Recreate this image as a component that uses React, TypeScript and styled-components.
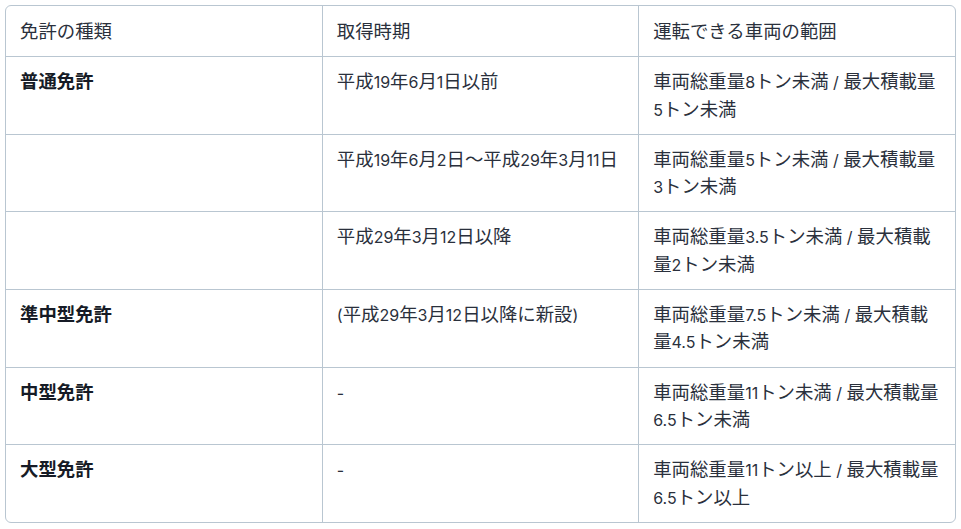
import React from "react";
import styled, { createGlobalStyle } from "styled-components";

const GlobalStyle = createGlobalStyle`
  html, body {
    margin: 0;
    padding: 0;
    background: #ffffff;
  }
  body {
    font-family: "Inter", "Noto Sans CJK JP", sans-serif;
    color: #1f2430;
  }
`;

const Frame = styled.div`
  margin: 5px;
  border: 1px solid #b9c6d1;
  border-radius: 6px;
  overflow: hidden;
`;

const Table = styled.table`
  width: 100%;
  border-collapse: collapse;
  table-layout: fixed;
  font-size: 18.4px;
  line-height: 27.3px;
`;

const Row = styled.tr<{ $last?: boolean }>`
  & > * {
    border-bottom: ${(p) => (p.$last ? "none" : "1px solid #b9c6d1")};
  }
`;

const Cell = styled.td<{ $strong?: boolean }>`
  padding: 11px 14px;
  vertical-align: top;
  text-align: left;
  font-weight: ${(p) => (p.$strong ? 700 : 400)};
  color: ${(p) => (p.$strong ? "#161b26" : "#2a303c")};
  &:not(:last-child) {
    border-right: 1px solid #b9c6d1;
  }
`;

const HeadCell = styled(Cell).attrs({ as: "th" })`
  font-weight: 400;
  padding-top: 11.5px;
  padding-bottom: 11.5px;
`;

const Latin = styled.span`
  font-size: 16px;
  line-height: 1;
`;

function mixed(text: string) {
  return text.split(/([\x20-\x7E]+)/).map((part, i) =>
    /^[\x20-\x7E]+$/.test(part) ? <Latin key={i}>{part}</Latin> : part
  );
}

const rows: [string, string, string][] = [
  ["普通免許", "平成19年6月1日以前", "車両総重量8トン未満 / 最大積載量5トン未満"],
  ["", "平成19年6月2日～平成29年3月11日", "車両総重量5トン未満 / 最大積載量3トン未満"],
  ["", "平成29年3月12日以降", "車両総重量3.5トン未満 / 最大積載量2トン未満"],
  ["準中型免許", "(平成29年3月12日以降に新設)", "車両総重量7.5トン未満 / 最大積載量4.5トン未満"],
  ["中型免許", "-", "車両総重量11トン未満 / 最大積載量6.5トン未満"],
  ["大型免許", "-", "車両総重量11トン以上 / 最大積載量6.5トン以上"],
];

export default function App() {
  return (
    <>
      <GlobalStyle />
      <Frame>
        <Table>
          <thead>
            <Row>
              <HeadCell>免許の種類</HeadCell>
              <HeadCell>取得時期</HeadCell>
              <HeadCell>運転できる車両の範囲</HeadCell>
            </Row>
          </thead>
          <tbody>
            {rows.map((r, i) => (
              <Row key={i} $last={i === rows.length - 1}>
                <Cell $strong>{mixed(r[0])}</Cell>
                <Cell>{mixed(r[1])}</Cell>
                <Cell>{mixed(r[2])}</Cell>
              </Row>
            ))}
          </tbody>
        </Table>
      </Frame>
    </>
  );
}
